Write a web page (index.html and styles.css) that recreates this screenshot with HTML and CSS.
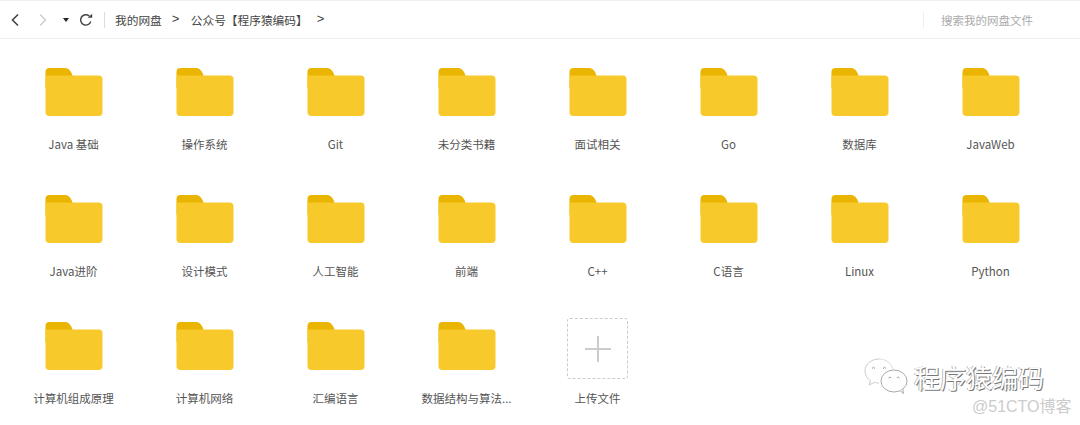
FILE: index.html
```html
<!DOCTYPE html>
<html lang="zh-CN">
<head>
    <meta charset="UTF-8">
    <title>我的网盘</title>
    <link rel="stylesheet" href="styles.css">
</head>
<body>
    <!-- Folder icon, reused by every grid item -->
    <svg class="defs">
        <symbol id="folder" viewBox="0 0 58 48">
            <path fill="#e9b500" d="M.5 20V4a4 4 0 0 1 4-4h15c4 0 6.500 2.500 8 7.500V20z"/>
            <path fill="#f7c92b" d="M.5 7.500h53a4 4 0 0 1 4 4V44a4 4 0 0 1-4 4h-49a4 4 0 0 1-4-4z"/>
        </symbol>
    </svg>

    <div class="toolbar">
        <div class="nav">
            <svg class="nav-icon back" width="10" height="14" viewBox="0 0 10 14"><path d="M8 1.500 2.500 7 8 12.500" fill="none" stroke="#444" stroke-width="1.600"/></svg>
            <svg class="nav-icon forward" width="10" height="14" viewBox="0 0 10 14"><path d="M2 1.500 7.500 7 2 12.500" fill="none" stroke="#ccc" stroke-width="1.400"/></svg>
            <span class="caret"></span>
            <svg class="nav-icon refresh" width="14" height="14" viewBox="0 0 14 14"><path d="M11.800 8.500A5.200 5.200 0 1 1 10.300 3" fill="none" stroke="#444" stroke-width="1.400"/><path d="M8.600 4.800h4.600V.8z" fill="#444"/></svg>
        </div>
        <div class="crumbs">
            <span>我的网盘</span>
            <span class="sep">&gt;</span>
            <span>公众号【程序猿编码】</span>
            <span class="sep">&gt;</span>
        </div>
        <div class="search">搜索我的网盘文件</div>
    </div>

    <div class="grid">
        <div class="item"><svg class="folder"><use href="#folder"/></svg><span class="name">Java 基础</span></div>
        <div class="item"><svg class="folder"><use href="#folder"/></svg><span class="name">操作系统</span></div>
        <div class="item"><svg class="folder"><use href="#folder"/></svg><span class="name">Git</span></div>
        <div class="item"><svg class="folder"><use href="#folder"/></svg><span class="name">未分类书籍</span></div>
        <div class="item"><svg class="folder"><use href="#folder"/></svg><span class="name">面试相关</span></div>
        <div class="item"><svg class="folder"><use href="#folder"/></svg><span class="name">Go</span></div>
        <div class="item"><svg class="folder"><use href="#folder"/></svg><span class="name">数据库</span></div>
        <div class="item"><svg class="folder"><use href="#folder"/></svg><span class="name">JavaWeb</span></div>

        <div class="item"><svg class="folder"><use href="#folder"/></svg><span class="name">Java进阶</span></div>
        <div class="item"><svg class="folder"><use href="#folder"/></svg><span class="name">设计模式</span></div>
        <div class="item"><svg class="folder"><use href="#folder"/></svg><span class="name">人工智能</span></div>
        <div class="item"><svg class="folder"><use href="#folder"/></svg><span class="name">前端</span></div>
        <div class="item"><svg class="folder"><use href="#folder"/></svg><span class="name">C++</span></div>
        <div class="item"><svg class="folder"><use href="#folder"/></svg><span class="name">C语言</span></div>
        <div class="item"><svg class="folder"><use href="#folder"/></svg><span class="name">Linux</span></div>
        <div class="item"><svg class="folder"><use href="#folder"/></svg><span class="name">Python</span></div>

        <div class="item"><svg class="folder"><use href="#folder"/></svg><span class="name">计算机组成原理</span></div>
        <div class="item"><svg class="folder"><use href="#folder"/></svg><span class="name">计算机网络</span></div>
        <div class="item"><svg class="folder"><use href="#folder"/></svg><span class="name">汇编语言</span></div>
        <div class="item"><svg class="folder"><use href="#folder"/></svg><span class="name">数据结构与算法...</span></div>
        <div class="item upload">
            <div class="upload-box"><span class="plus"></span></div>
            <span class="name">上传文件</span>
        </div>
    </div>

    <!-- Watermark over the page corner -->
    <div class="watermark">
        <svg class="wechat" width="44" height="38" viewBox="0 0 44 38">
            <path d="M15 1C7 1 1 6.500 1 13c0 4 2.200 7.500 5.500 9.800L5 27l5.200-2.500c1.500.4 3 .6 4.800.6" fill="#fff" stroke="#ccc" stroke-width="1"/>
            <path d="M15 1c7 0 12.500 4.500 13.700 10" fill="none" stroke="#ddd" stroke-width="1"/>
            <ellipse cx="30" cy="23" rx="13" ry="11" fill="#fff" stroke="#aaa" stroke-width="1"/>
            <path d="M36 32.500l3.500 3-.8-4.800" fill="#fff" stroke="#aaa" stroke-width="1"/>
            <path d="M8 10.500q1.500-2.500 3 0M19 10.500q1.500-2.500 3 0M24.500 20q1.300-2 2.600 0M33 20q1.300-2 2.600 0" fill="none" stroke="#999" stroke-width="1"/>
        </svg>
        <span class="wm-title">程序猿编码</span>
    </div>
    <div class="wm-source">@51CTO博客</div>
</body>
</html>
```

FILE: styles.css
```css
* {
    box-sizing: border-box;
}
html, body {
    height: 425px;
    overflow: hidden;
}
body {
    margin: 0;
    position: relative;
    background-color: #fff;
    color: #555;
    font-family: "Noto Sans CJK SC", "Open Sans", sans-serif;
    font-size: 11.500px;
}
.defs {
    display: none;
}

/* Top bar */
.toolbar {
    height: 39px;
    display: flex;
    align-items: center;
    border-top: 1px solid #f0f0f0;
    border-bottom: 1px solid #eee;
}
.nav {
    width: 105px;
    height: 16px;
    display: flex;
    align-items: center;
    border-right: 1px solid #ddd;
    padding-left: 10px;
}
.nav-icon {
    display: block;
}
.forward {
    margin-left: 18px;
}
.caret {
    width: 0;
    height: 0;
    margin-left: 15px;
    border: 3px solid transparent;
    border-top: 4px solid #222;
    border-bottom: 0;
}
.refresh {
    margin-left: 10px;
}
.crumbs {
    display: flex;
    margin-left: 10px;
    color: #444;
    font-size: 11.700px;
}
.sep {
    width: 8px;
    margin: 0 11px 0 10px;
    font-family: "Liberation Sans", sans-serif;
    font-size: 13px;
}
.crumbs .sep:last-child {
    margin-left: 9px;
}
.search {
    margin-left: auto;
    width: 157px;
    height: 16px;
    line-height: 16px;
    padding-left: 17px;
    border-left: 1px solid #eee;
    color: #aaa;
}

/* Folder grid */
.grid {
    display: grid;
    grid-template-columns: repeat(8, 131px);
    row-gap: 43px;
    padding: 29px 0 0 8px;
}
.item {
    display: flex;
    flex-direction: column;
    align-items: center;
}
.folder {
    width: 58px;
    height: 48px;
    display: block;
}
.name {
    margin-top: 20px;
    line-height: 16px;
}
.upload-box {
    width: 61px;
    height: 61px;
    margin-top: -4px;
    border: 1px dashed #ccc;
    border-radius: 3px;
    display: flex;
    align-items: center;
    justify-content: center;
}
.plus {
    width: 26px;
    height: 26px;
    background:
        linear-gradient(#ccc, #ccc) center / 26px 2px no-repeat,
        linear-gradient(#ccc, #ccc) center / 2px 26px no-repeat;
}
.upload .name {
    margin-top: 11px;
}

/* Watermark */
.watermark {
    position: absolute;
    left: 864px;
    top: 358px;
    display: flex;
    align-items: center;
    gap: 6px;
}
.wm-title {
    font-size: 26px;
    line-height: 38px;
    color: #fff;
    text-shadow: 1px 1px 0 #777, -1px 0 0 #bbb;
}
.wm-source {
    position: absolute;
    left: 972px;
    top: 397px;
    font-family: "Liberation Sans", "Noto Sans CJK SC", sans-serif;
    font-size: 16px;
    line-height: 20px;
    color: #ccc;
}
```
